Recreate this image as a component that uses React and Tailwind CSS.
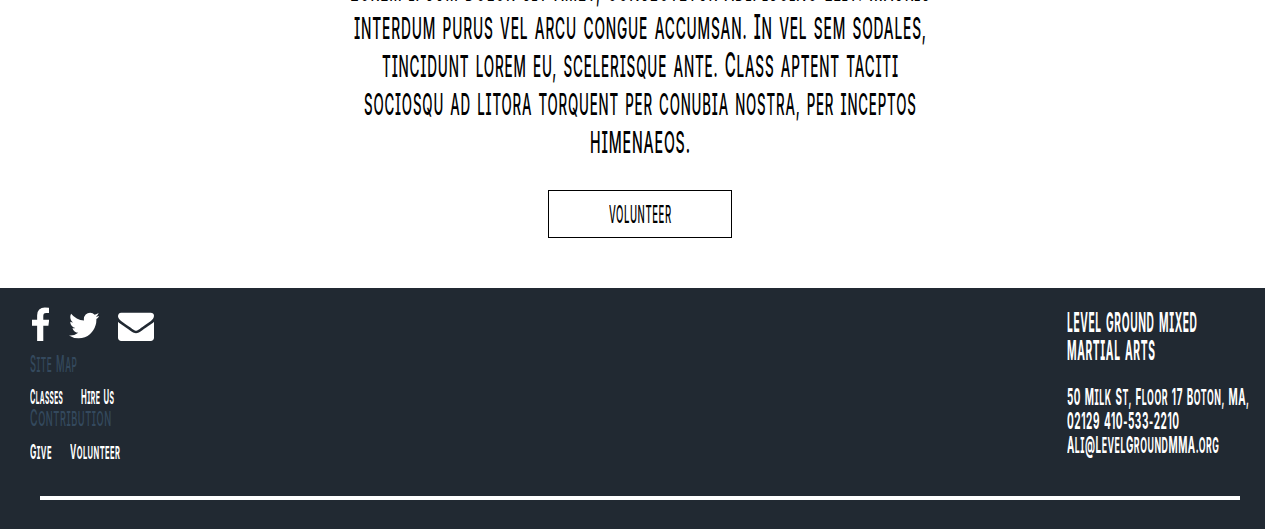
import { useLayoutEffect, useRef, useState } from "react";

// Narrow lettering: the text is condensed horizontally to the given width.
// Unless `plain`, capitals and digits stand a little taller than other letters.
function Narrow({ children, width, plain = false, className = "" }) {
  const ref = useRef(null);
  const [scale, setScale] = useState(0.5);
  useLayoutEffect(() => {
    const el = ref.current;
    const spacing = parseFloat(getComputedStyle(el).letterSpacing) || 0;
    setScale(width / (el.offsetWidth - spacing));
  }, [width, children]);
  const parts = plain ? [children] : children.split(/([A-Z0-9@]+)/);
  return (
    <span className={`block ${className}`} style={{ width }}>
      <span
        ref={ref}
        className="inline-block origin-left whitespace-nowrap align-top uppercase tracking-[0.06em] [word-spacing:0.14em]"
        style={{ transform: `scaleX(${scale})` }}
      >
        {parts.map((p, i) =>
          i % 2 ? (
            <span key={i} className="text-[1.12em] leading-[0]">{p}</span>
          ) : (
            p
          )
        )}
      </span>
    </span>
  );
}

const lines = [
  ["Lorem ipsum dolor sit amet, consectetur adipiscing elit. Mauris", 580],
  ["interdum purus vel arcu congue accumsan. In vel sem sodales,", 572],
  ["tincidunt lorem eu, scelerisque ante. Class aptent taciti", 516],
  ["sociosqu ad litora torquent per conubia nostra, per inceptos", 552],
  ["himenaeos.", 100],
];

function Icon({ d, className, box = "0 -24 1792 1792" }) {
  return (
    <svg viewBox={box} preserveAspectRatio="none" fill="currentColor" className={`h-9 ${className}`}>
      <path d={d} />
    </svg>
  );
}

const facebook =
  "M1343 12v264h-157q-86 0-116 36t-30 108v189h293l-39 296h-254v759h-306v-759h-255v-296h255v-218q0-186 104-288.5t277-102.5q147 0 228 12z";
const twitter =
  "M1684 408q-67 98-162 167 1 14 1 42 0 130-38 259.5t-115.5 248.5-184.5 210.5-258 146-323 54.5q-271 0-496-145 35 4 78 4 225 0 401-138-105-2-188-64.5t-114-159.5q33 5 61 5 43 0 85-11-112-23-185.5-111.5t-73.5-205.5v-4q68 38 146 41-66-44-105-115t-39-154q0-88 44-163 121 149 294.5 238.5t371.5 99.5q-8-38-8-74 0-134 94.5-228.5t228.5-94.5q140 0 236 102 109-21 205-78-37 115-142 178 93-10 186-50z";
const envelope =
  "M1792 710v794q0 66-47 113t-113 47h-1472q-66 0-113-47t-47-113v-794q44 49 101 87 362 246 497 345 57 42 92.5 65.5t94.5 48 110 24.5h2q51 0 110-24.5t94.5-48 92.5-65.5q170-123 498-345 57-39 100-87zm0-294q0 79-49 151t-122 123q-376 261-468 325-10 7-42.5 31t-54 38.5-52 32.5-57.5 27-50 9h-2q-23 0-50-9t-57.5-27-52-32.5-54-38.5-42.5-31q-91-64-262-182.5t-205-142.5q-62-42-117-115.5t-55-136.5q0-78 41.5-130t118.5-52h1472q65 0 112.5 47t47.5 113z";

export default function App() {
  return (
    <div className="flex h-[529px] w-[1265px] flex-col overflow-hidden bg-white font-['Inter','Liberation_Sans',sans-serif] text-black [font-feature-settings:'cv08']">
      <main className="flex h-[288px] shrink-0 flex-col items-center overflow-hidden pl-[15px]">
        <p className="-mt-[29px] flex shrink-0 flex-col items-center text-[30px] font-medium leading-[38px]">
          {lines.map(([text, width]) => (
            <Narrow key={text} width={width}>{text}</Narrow>
          ))}
        </p>
        <button className="mt-[29px] flex h-12 w-46 shrink-0 items-center justify-center border border-black text-[24.5px] font-medium leading-6">
          <Narrow width={62} plain>Volunteer</Narrow>
        </button>
      </main>
      <footer className="flex h-[241px] shrink-0 flex-col bg-[#212932] text-white">
        <div className="flex h-[208px] justify-between pl-[30px]">
          <div className="pt-[19px]">
            <div className="flex h-9">
              <Icon d={facebook} box="479 -24 864 1792" className="ml-[1.5px] w-[17.4px]" />
              <Icon d={twitter} box="108 -24 1576 1792" className="ml-5 w-[30.5px]" />
              <Icon d={envelope} className="ml-[18.6px] w-9" />
            </div>
            <h4 className="mt-[10px] text-[20.5px] font-medium leading-6 text-[#34495e]">
              <Narrow width={47}>Site Map</Narrow>
            </h4>
            <div className="mt-[11px] flex gap-[18px] text-[17.5px] font-bold leading-5">
              <Narrow width={33}>Classes</Narrow>
              <Narrow width={33}>Hire Us</Narrow>
            </div>
            <h4 className="-mt-px text-[20.5px] font-medium leading-6 text-[#34495e]">
              <Narrow width={81}>Contribution</Narrow>
            </h4>
            <div className="mt-3 flex gap-[18px] text-[17.5px] font-bold leading-5">
              <Narrow width={21.5}>Give</Narrow>
              <Narrow width={50}>Volunteer</Narrow>
            </div>
          </div>
          <div className="w-[198px] pt-5">
            <h3 className="text-[27.5px] font-bold leading-7">
              <Narrow width={130} plain>Level Ground Mixed</Narrow>
              <Narrow width={88} plain>Martial Arts</Narrow>
            </h3>
            <address className="mt-[22px] text-[21px] font-bold not-italic leading-6">
              <Narrow width={182}>50 Milk St, Floor 17 Boton, MA,</Narrow>
              <Narrow width={112}>02129 410-533-2210</Narrow>
              <Narrow width={152}>Ali@LevelGroundMMA.org</Narrow>
            </address>
          </div>
        </div>
        <hr className="ml-10 h-1 w-[1200px] border-0 bg-white" />
      </footer>
    </div>
  );
}
